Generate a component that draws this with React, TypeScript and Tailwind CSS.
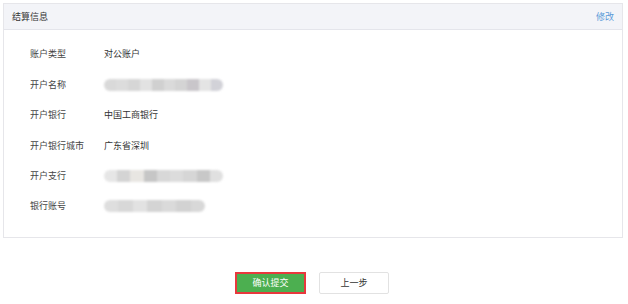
import React from "react";

interface Row {
  label: string;
  value?: string;
  blur?: string[];
  width?: number;
}

const rows: Row[] = [
  { label: "账户类型", value: "对公账户" },
  {
    label: "开户名称",
    blur: ["#d9d9d9", "#dcdcdc", "#d6d6d6", "#e2e2e2", "#d0d0d0", "#dadada", "#d4d4d4", "#c9c6ca", "#e4e4e4", "#d2d2d8"],
    width: 119,
  },
  { label: "开户银行", value: "中国工商银行" },
  { label: "开户银行城市", value: "广东省深圳" },
  {
    label: "开户支行",
    blur: ["#e6e6e6", "#d4d4d4", "#e8e6e2", "#c6c6c6", "#d8d8d8", "#dcdcdc", "#d6d6d6", "#c8c8c8", "#e0e0e0"],
    width: 119,
  },
  {
    label: "银行账号",
    blur: ["#dedede", "#d8d8d8", "#e2e2e2", "#d4d4d4", "#dadada", "#d2d2d2", "#d8d8d8"],
    width: 101,
  },
];

function Mosaic({ colors, width }: { colors: string[]; width: number }) {
  return (
    <div
      className="flex h-[12px] rounded-full overflow-hidden blur-[0.8px]"
      style={{ width }}
    >
      {colors.map((c, i) => (
        <div key={i} className="flex-1 h-full" style={{ backgroundColor: c }} />
      ))}
    </div>
  );
}

export default function App() {
  return (
    <div
      className="w-[628px] h-[304px] bg-white pt-[3px] pl-[3px]"
      style={{ fontFamily: '"Noto Sans CJK SC", "Noto Sans", sans-serif' }}
    >
      <div className="w-[620px] h-[235px] border border-[#e6e6ea] bg-white">
        <div className="h-[26px] bg-[#f3f4f8] border-b border-[#e4e5eb] flex items-center justify-between pl-[8px] pr-[8px]">
          <span className="text-[9px] text-[#333]">结算信息</span>
          <span className="text-[9px] text-[#5a9ad8]">修改</span>
        </div>
        <div className="pt-[9px] pl-[26px]">
          {rows.map((r) => (
            <div key={r.label} className="h-[30.4px] flex items-center text-[9px]">
              <span className="w-[74px] text-[#444]">{r.label}</span>
              {r.value ? (
                <span className="text-[#333]">{r.value}</span>
              ) : (
                <Mosaic colors={r.blur!} width={r.width!} />
              )}
            </div>
          ))}
        </div>
      </div>
      <div className="flex justify-center gap-[13px] mt-[34px] pr-[7px]">
        <button className="w-[71px] h-[22px] bg-[#4caf50] border-2 border-[#e8383d] text-white text-[9px]">
          确认提交
        </button>
        <button className="w-[70px] h-[22px] bg-white border border-[#e2e2e2] rounded-[2px] text-[#333] text-[9px]">
          上一步
        </button>
      </div>
    </div>
  );
}
